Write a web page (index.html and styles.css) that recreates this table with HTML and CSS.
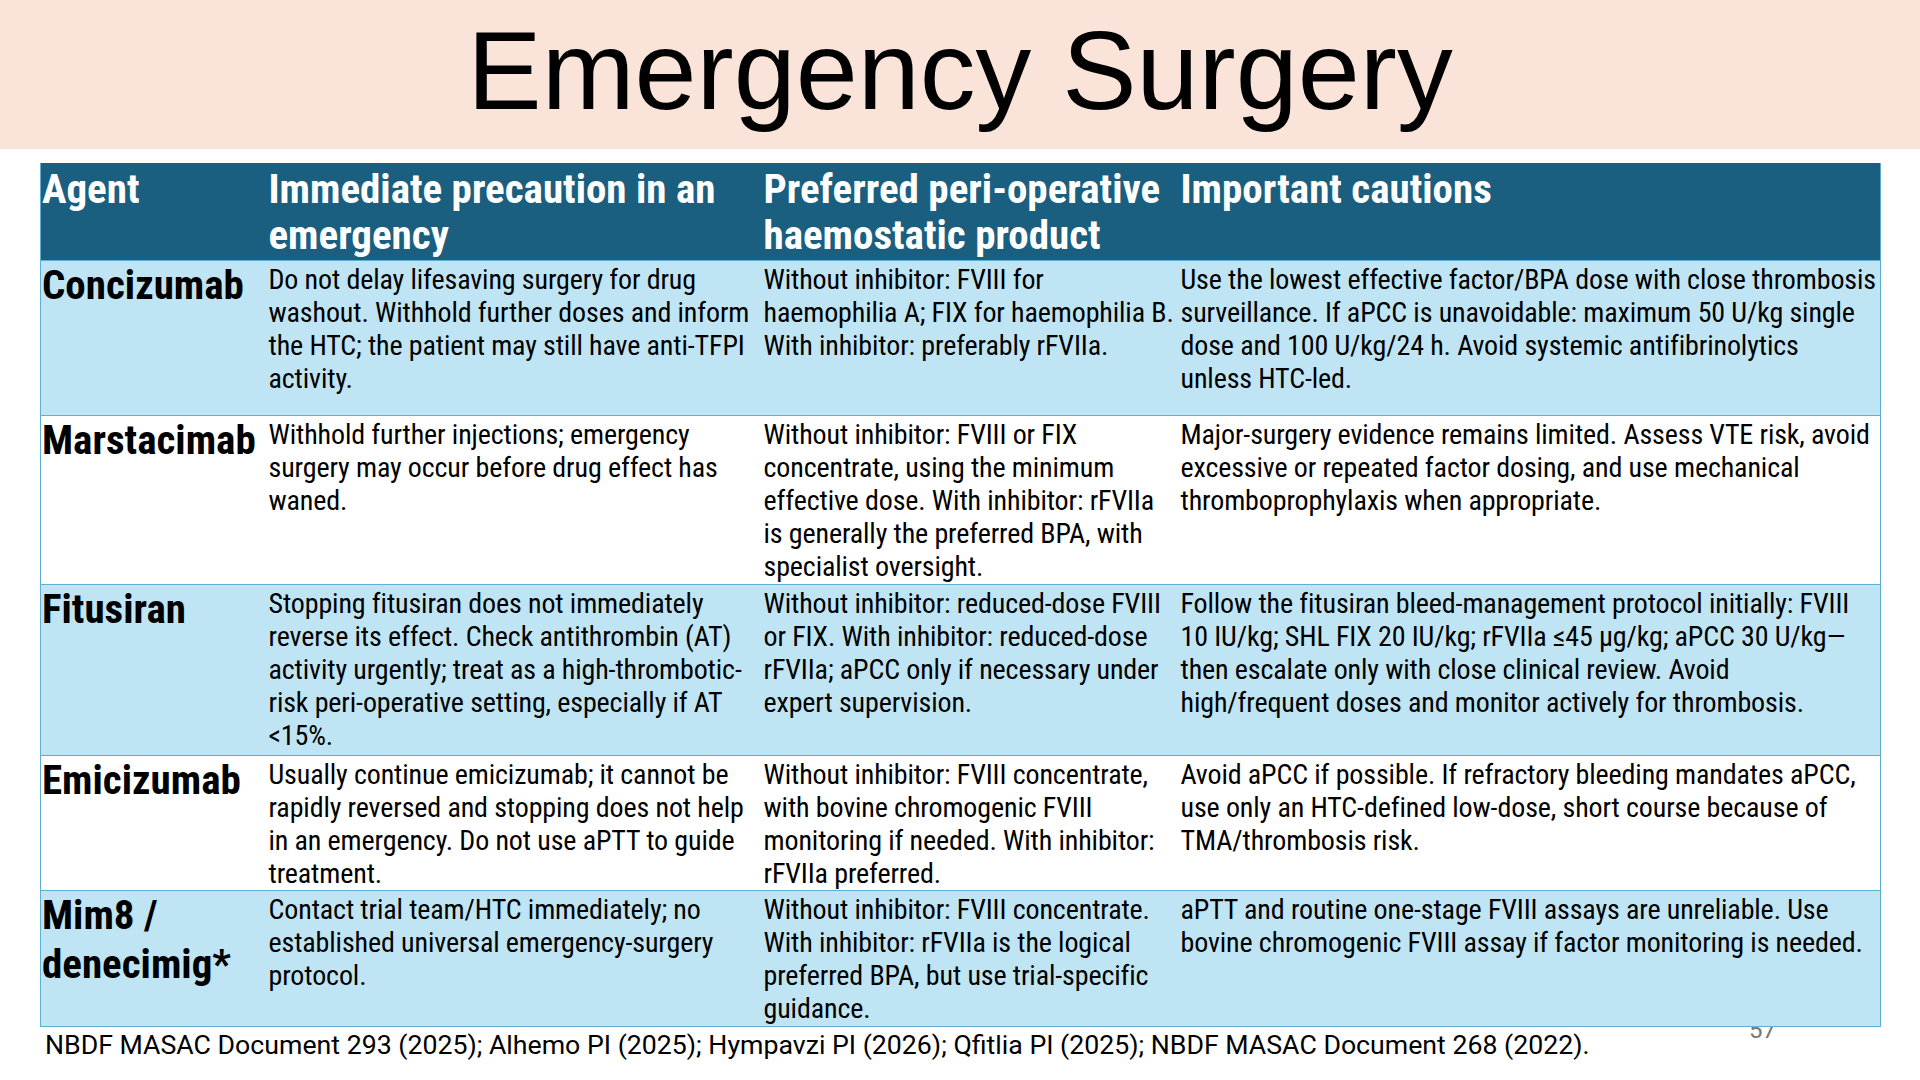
FILE: index.html
```html
<!DOCTYPE html>
<html lang="en">
<head>
<meta charset="utf-8">
<title>Emergency Surgery</title>
<link rel="stylesheet" href="styles.css">
</head>
<body>
<div class="slide">
  <header class="banner">
    <h1 class="title">Emergency Surgery</h1>
  </header>
  <main class="content">
    <table class="grid">
      <colgroup>
        <col class="c-agent">
        <col class="c-prec">
        <col class="c-prod">
        <col class="c-caut">
      </colgroup>
      <thead>
        <tr class="head">
          <th class="first">Agent</th>
          <th>Immediate precaution in an emergency</th>
          <th>Preferred peri-operative haemostatic product</th>
          <th>Important cautions</th>
        </tr>
      </thead>
      <tbody>
        <tr class="row tint h1">
          <th class="agent">Concizumab</th>
          <td>Do not delay lifesaving surgery for drug washout. Withhold further doses and inform the HTC; the patient may still have anti-TFPI activity.</td>
          <td>Without inhibitor: FVIII for haemophilia A; FIX for haemophilia B. With inhibitor: preferably rFVIIa.</td>
          <td>Use the lowest effective factor/BPA dose with close thrombosis surveillance. If aPCC is unavoidable: maximum 50 U/kg single dose and 100 U/kg/24 h. Avoid systemic antifibrinolytics unless&nbsp;HTC-led.</td>
        </tr>
        <tr class="row h2">
          <th class="agent">Marstacimab</th>
          <td>Withhold further injections; emergency surgery may occur before drug effect has waned.</td>
          <td>Without inhibitor: FVIII or FIX concentrate, using the minimum effective dose. With inhibitor: rFVIIa is generally the preferred BPA, with specialist oversight.</td>
          <td>Major-surgery evidence remains limited. Assess VTE risk, avoid excessive or repeated factor dosing, and use mechanical thromboprophylaxis when appropriate.</td>
        </tr>
        <tr class="row tint h3">
          <th class="agent">Fitusiran</th>
          <td>Stopping fitusiran does not immediately reverse its effect. Check antithrombin (AT) activity urgently; treat as a high-thrombotic-risk peri-operative setting, especially if AT &lt;15%.</td>
          <td>Without inhibitor: reduced-dose FVIII or FIX. With inhibitor: reduced-dose rFVIIa; aPCC only if necessary under expert supervision.</td>
          <td>Follow the fitusiran bleed-management protocol initially: FVIII 10 IU/kg; SHL FIX 20 IU/kg; rFVIIa ≤45 µg/kg; aPCC 30 U/kg—then escalate only with close clinical review. Avoid high/frequent doses and monitor actively for thrombosis.</td>
        </tr>
        <tr class="row h4">
          <th class="agent">Emicizumab</th>
          <td>Usually continue emicizumab; it cannot be rapidly reversed and stopping does not help in an emergency. Do not use aPTT to guide treatment.</td>
          <td>Without inhibitor: FVIII concentrate, with bovine chromogenic FVIII monitoring if needed. With inhibitor: rFVIIa preferred.</td>
          <td>Avoid aPCC if possible. If refractory bleeding mandates aPCC, use only an HTC-defined low-dose, short course because of TMA/thrombosis risk.</td>
        </tr>
        <tr class="row tint h5">
          <th class="agent">Mim8 / denecimig*</th>
          <td>Contact trial team/HTC immediately; no established universal emergency-surgery protocol.</td>
          <td>Without inhibitor: FVIII concentrate. With inhibitor: rFVIIa is the logical preferred BPA, but use trial-specific guidance.</td>
          <td>aPTT and routine one-stage FVIII assays are unreliable. Use bovine chromogenic FVIII assay if factor monitoring is needed.</td>
        </tr>
      </tbody>
    </table>
    <p class="refs">NBDF MASAC Document 293 (2025); Alhemo PI (2025); Hympavzi PI (2026); Qfitlia PI (2025); NBDF MASAC Document 268 (2022).</p>
    <span class="pagenum">57</span>
  </main>
</div>
</body>
</html>
```
FILE: styles.css
```css
html, body {
  margin: 0;
  padding: 0;
  background: #ffffff;
}

.slide {
  width: 1920px;
  height: 1080px;
  overflow: hidden;
  background: #ffffff;
  font-family: "Roboto", "Liberation Sans", sans-serif;
  color: #000000;
}

.banner {
  height: 149px;
  background: #fae3d9;
  display: flex;
  justify-content: center;
}

.title {
  margin: 0;
  padding-top: 15px;
  font-family: "Liberation Sans", Arial, sans-serif;
  font-weight: 400;
  font-size: 111.5px;
  line-height: 1;
  color: #000000;
}

.content {
  position: relative;
  padding: 14px 40px 0 40px;
}

.grid {
  position: relative;
  z-index: 1;
  width: 1840px;
  table-layout: fixed;
  border-collapse: collapse;
  font-family: "Roboto Condensed", "Roboto", sans-serif;
  font-stretch: 75%;
  border-left: 1px solid #5eafd6;
  border-right: 1px solid #5eafd6;
}

.c-agent { width: 225px; }
.c-prec { width: 495px; }
.c-prod { width: 417px; }
.c-caut { width: 703px; }

.grid th,
.grid td {
  vertical-align: top;
  text-align: left;
  padding: 2px 0 0 3px;
}

.head {
  height: 97px;
  background: #1b5f80;
  color: #ffffff;
}

.head th {
  font-size: 41px;
  line-height: 46px;
  font-weight: 700;
  padding-top: 3px;
}

.head th.first {
  padding-left: 1px;
}

.row td {
  font-size: 28px;
  line-height: 33px;
  font-weight: 400;
  letter-spacing: -0.12px;
  color: #000000;
}

.row th.agent {
  font-size: 41px;
  line-height: 49px;
  font-weight: 700;
  padding: 0 0 0 1px;
  color: #000000;
}

.row {
  background: #ffffff;
  border-top: 1px solid #5eafd6;
}

.row.tint {
  background: #bfe4f3;
}

.grid tbody tr:last-child {
  border-bottom: 1px solid #5eafd6;
}

.h1 { height: 155px; }
.h2 { height: 169px; }
.h3 { height: 171px; }
.h4 { height: 134px; }
.h5 { height: 136px; }

.refs {
  margin: 0;
  padding-left: 5px;
  font-family: "Roboto", "Liberation Sans", sans-serif;
  font-size: 26.7px;
  line-height: 36px;
  color: #000000;
}

.pagenum {
  position: absolute;
  left: 1749px;
  top: 867px;
  z-index: 0;
  font-family: "Roboto", sans-serif;
  font-size: 24px;
  color: #777777;
}
```
